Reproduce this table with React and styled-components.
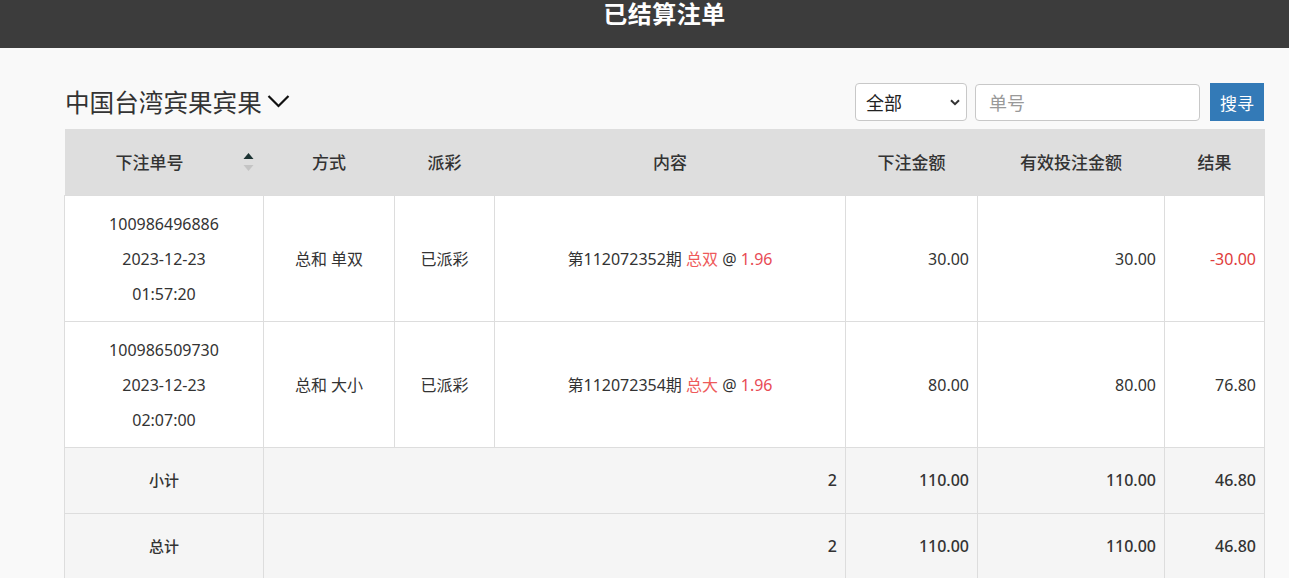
import React from "react";
import styled, { createGlobalStyle } from "styled-components";

const Global = createGlobalStyle`
  html, body { margin: 0; padding: 0; background: #f9f9f9; }
  body { font-family: "Noto Sans", "Noto Sans CJK SC", sans-serif; color: #333; }
  * { box-sizing: border-box; }
`;

const TopBar = styled.header`
  height: 48px;
  background: #3c3c3c;
  color: #fff;
  display: flex;
  justify-content: center;
  align-items: flex-start;
  padding-left: 40px;
`;

const TopTitle = styled.h1`
  margin: 0;
  padding-top: 1px;
  font-family: "Noto Sans CJK SC", sans-serif;
  font-size: 24px;
  line-height: 24px;
  font-weight: 700;
  letter-spacing: 0.5px;
`;

const Main = styled.main`
  width: 1200px;
  margin-left: 64px;
  padding-top: 35px;
`;

const Toolbar = styled.div`
  display: flex;
  align-items: center;
  height: 38px;
  margin-bottom: 8px;
`;

const GameTitle = styled.div`
  display: flex;
  align-items: center;
  gap: 5px;
  font-family: "Noto Sans CJK SC", sans-serif;
  font-size: 24.6px;
  color: #333;
  margin-left: 1px;
  margin-top: -2px;
  flex: 1;
`;

const SelectWrap = styled.div`
  position: relative;
  width: 112px;
  height: 38px;
  margin-right: 8px;
`;

const Select = styled.select`
  appearance: none;
  width: 100%;
  height: 100%;
  border: 1px solid #c8c8c8;
  border-radius: 4px;
  background: #fff;
  font-family: "Noto Sans CJK SC", sans-serif;
  font-size: 18px;
  color: #222;
  padding: 0 10px;
`;

const SelectArrow = styled.svg`
  position: absolute;
  right: 7px;
  top: 16px;
  pointer-events: none;
`;

const Input = styled.input`
  width: 225px;
  height: 37px;
  border: 1px solid #c8c8c8;
  border-radius: 4px;
  background: #fff;
  font-family: "Noto Sans CJK SC", sans-serif;
  font-size: 18px;
  padding: 0 13px;
  margin-right: 10px;
  &::placeholder { color: #999; }
`;

const Button = styled.button`
  width: 54px;
  height: 38px;
  border: none;
  background: #337ab7;
  color: #fff;
  font-family: "Noto Sans CJK SC", sans-serif;
  font-size: 17px;
  padding: 0;
`;

const Table = styled.table`
  width: 1200px;
  table-layout: fixed;
  border-collapse: collapse;
  font-size: 16px;
  color: #333;
`;

const HeadRow = styled.tr`
  background: #dedede;
  height: 66px;
`;

const Th = styled.th`
  position: relative;
  font-size: 17px;
  font-weight: 500;
  color: #333;
  text-align: center;
  vertical-align: middle;
  padding: 0 ${(p) => (p.$sortable ? "37px" : "8px")} 0 8px;
`;

const SortIcon = styled.svg`
  position: absolute;
  right: 10px;
  top: 23px;
`;

const Td = styled.td`
  border: 1px solid #ddd;
  background: ${(p) => (p.$sum ? "#f5f5f5" : "#fff")};
  text-align: ${(p) => p.$align || "center"};
  vertical-align: middle;
  padding: ${(p) => (p.$sum ? "0 8px" : "11px 8px 9px")};
  line-height: 35px;
  font-weight: ${(p) => (p.$sum ? 500 : 400)};
  font-size: ${(p) => (p.$small ? "15px" : "16px")};
  color: ${(p) => (p.$neg ? "#e03c3c" : "#333")};
  height: ${(p) => (p.$sum ? "66px" : "125px")};
`;

const Red = styled.span`
  color: ${(p) => p.$tone || "#e84b55"};
`;

const Chevron = () => (
  <svg width="23" height="14" viewBox="0 0 23 14">
    <polyline points="1.5,2 11.5,12 21.5,2" fill="none" stroke="#111" strokeWidth="2.2" />
  </svg>
);

const rows = [
  {
    no: "100986496886", date: "2023-12-23", time: "01:57:20", way: "总和 单双",
    period: "112072352", pick: "总双", amount: "30.00", valid: "30.00", result: "-30.00", neg: true,
  },
  {
    no: "100986509730", date: "2023-12-23", time: "02:07:00", way: "总和 大小",
    period: "112072354", pick: "总大", amount: "80.00", valid: "80.00", result: "76.80", neg: false,
  },
];

export default function App() {
  return (
    <>
      <Global />
      <TopBar>
        <TopTitle>已结算注单</TopTitle>
      </TopBar>
      <Main>
        <Toolbar>
          <GameTitle>
            中国台湾宾果宾果
            <Chevron />
          </GameTitle>
          <SelectWrap>
            <Select defaultValue="all">
              <option value="all">全部</option>
            </Select>
            <SelectArrow width="10" height="7" viewBox="0 0 10 7">
              <polyline points="1,1.2 5,5.2 9,1.2" fill="none" stroke="#333" strokeWidth="2" />
            </SelectArrow>
          </SelectWrap>
          <Input placeholder="单号" />
          <Button>搜寻</Button>
        </Toolbar>
        <Table>
          <colgroup>
            <col style={{ width: 199 }} />
            <col style={{ width: 131 }} />
            <col style={{ width: 100 }} />
            <col style={{ width: 351 }} />
            <col style={{ width: 132 }} />
            <col style={{ width: 187 }} />
            <col style={{ width: 100 }} />
          </colgroup>
          <thead>
            <HeadRow>
              <Th $sortable>
                下注单号
                <SortIcon width="11" height="20" viewBox="0 0 11 20">
                  <polygon points="5.5,1 10.5,7 0.5,7" fill="#1c3333" />
                  <polygon points="0.5,13 10.5,13 5.5,19" fill="#c4c4c4" />
                </SortIcon>
              </Th>
              <Th>方式</Th>
              <Th>派彩</Th>
              <Th>内容</Th>
              <Th>下注金额</Th>
              <Th>有效投注金额</Th>
              <Th>结果</Th>
            </HeadRow>
          </thead>
          <tbody>
            {rows.map((r) => (
              <tr key={r.no}>
                <Td>
                  {r.no}
                  <br />
                  {r.date}
                  <br />
                  {r.time}
                </Td>
                <Td>{r.way}</Td>
                <Td>已派彩</Td>
                <Td>
                  第{r.period}期 <Red $tone="#ee5a5a">{r.pick}</Red> @ <Red>1.96</Red>
                </Td>
                <Td $align="right">{r.amount}</Td>
                <Td $align="right">{r.valid}</Td>
                <Td $align="right" $neg={r.neg}>{r.result}</Td>
              </tr>
            ))}
            {["小计", "总计"].map((label) => (
              <tr key={label}>
                <Td $sum $small>{label}</Td>
                <Td $sum colSpan={3} $align="right">2</Td>
                <Td $sum $align="right">110.00</Td>
                <Td $sum $align="right">110.00</Td>
                <Td $sum $align="right">46.80</Td>
              </tr>
            ))}
          </tbody>
        </Table>
      </Main>
    </>
  );
}
